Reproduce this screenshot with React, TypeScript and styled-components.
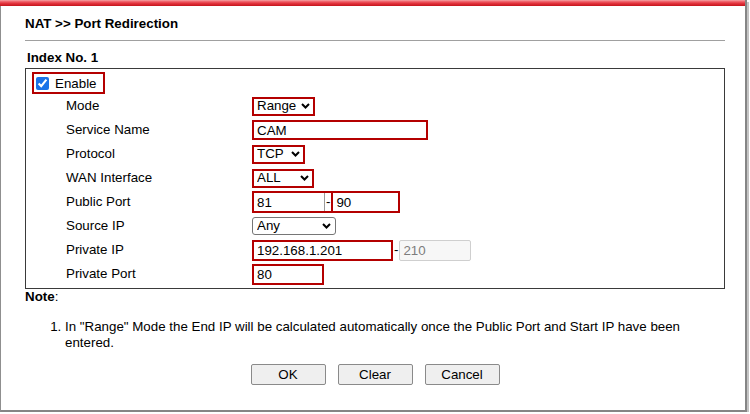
import React from "react";
import styled, { createGlobalStyle } from "styled-components";

const Global = createGlobalStyle`
  html, body { margin: 0; padding: 0; background: #fff; }
  body { font-family: "Liberation Sans", Arial, sans-serif; font-size: 13.33px; color: #000; }
  * { box-sizing: border-box; }
`;

const RED = "#b40000";
const FONT = `13.33px "Liberation Sans", Arial, sans-serif`;

const Frame = styled.div`
  width: 747px;
  height: 412px;
  background: #fff;
  border-left: 1px solid #8f8f8f;
  border-right: 2px solid #858585;
  border-bottom: 2px solid #858585;
  box-shadow: 2px 2px 0 #c4c4c4;
  display: flex;
  flex-direction: column;
`;

const TopBar = styled.div`
  height: 6px;
  margin-left: -1px;
  background: linear-gradient(#f6a3a6 0%, #ee5a62 30%, #e0303a 60%, #c4141c 100%);
`;

const Content = styled.div`
  padding: 0 20px 0 24px;
  display: flex;
  flex-direction: column;
`;

const Title = styled.div`
  padding: 10px 0 8px 0;
  line-height: 16px;
  font-weight: bold;
  border-bottom: 1px solid #a0a0a0;
`;

const IndexTitle = styled.div`
  margin: 9px 0 2px 2px;
  line-height: 16px;
  font-weight: bold;
`;

const Box = styled.div`
  border: 1px solid #3a3a3a;
  padding: 0 0 2px 0;
  display: flex;
  flex-direction: column;
`;

const EnableBox = styled.label`
  align-self: flex-start;
  margin: 3px 0 0 6px;
  height: 22px;
  border: 2px solid ${RED};
  padding: 0 6px 0 2px;
  display: inline-flex;
  align-items: center;
  gap: 6px;
`;

const Check = styled.input`
  width: 13px;
  height: 13px;
  margin: 0;
  accent-color: #1a73e8;
`;

const Rows = styled.div`
  padding-left: 40px;
  display: grid;
  grid-template-columns: 186px auto;
  grid-auto-rows: 24px;
  align-items: center;
`;

const Label = styled.div`
  line-height: 16px;
`;

const Cell = styled.div`
  display: flex;
  align-items: center;
  gap: 1px;
`;

const TextInput = styled.input<{ $w: number; $h: number }>`
  width: ${(p) => p.$w}px;
  height: ${(p) => p.$h}px;
  border: 2px solid ${RED};
  padding: 0 3px;
  margin: 0;
  font: ${FONT};
  color: #000;
  background: #fff;
  outline: none;
`;

const DisabledInput = styled.input`
  width: 72px;
  height: 21px;
  margin: 0;
  border: 1px solid #cfcfcf;
  border-radius: 2px;
  padding: 0 3px;
  font: ${FONT};
  color: #7d7d7d;
  background: #f7f7f7;
`;

const SelectWrap = styled.div`
  position: relative;
  display: inline-block;
`;

const Select = styled.select<{ $w: number; $h: number; $plain?: boolean }>`
  appearance: none;
  -webkit-appearance: none;
  width: ${(p) => p.$w}px;
  height: ${(p) => p.$h}px;
  margin: 0;
  padding: 0 0 0 ${(p) => (p.$plain ? 4 : 3)}px;
  border: ${(p) => (p.$plain ? "1px solid #767676" : `2px solid ${RED}`)};
  border-radius: ${(p) => (p.$plain ? "3px" : "0")};
  font: ${FONT};
  color: #000;
  background: #fff;
  line-height: 1;
`;

const Chevron = styled.svg`
  position: absolute;
  right: 5px;
  top: 50%;
  margin-top: -3px;
  pointer-events: none;
`;

const PortGroup = styled.div`
  display: inline-flex;
  align-items: stretch;
  width: 148px;
  height: 22px;
  border: 2px solid ${RED};
`;

const PortInput = styled.input<{ $first?: boolean }>`
  flex: ${(p) => (p.$first ? "0 0 71px" : "1 1 auto")};
  min-width: 0;
  margin: 0;
  border: none;
  ${(p) => (p.$first ? "border-right: 1px solid #9a9a9a;" : `border-left: 2px solid ${RED};`)}
  padding: 0 3px;
  font: ${FONT};
  color: #000;
  background: #fff;
  outline: none;
`;

const Dash = styled.span<{ $pad?: number }>`
  display: inline-flex;
  align-items: center;
  padding: 0 ${(p) => p.$pad ?? 1}px;
  line-height: 16px;
`;

const Note = styled.div`
  line-height: 16px;
  b { font-weight: bold; }
`;

const List = styled.ol`
  margin: 14px 0 0 0;
  padding: 0 20px 0 40px;
  line-height: 16px;
`;

const ButtonRow = styled.div`
  margin-top: 13px;
  display: flex;
  justify-content: center;
  gap: 12px;
`;

const Button = styled.button`
  width: 75px;
  height: 21px;
  border: 1px solid #8a8a8a;
  border-radius: 2px;
  background: #efefef;
  font: ${FONT};
  color: #000;
  padding: 0;
`;

const ChevronIcon = () => (
  <Chevron width="9" height="6" viewBox="0 0 9 6">
    <path d="M1 1 L4.5 4.5 L8 1" fill="none" stroke="#000" strokeWidth="2" />
  </Chevron>
);

type SelProps = { value: string; w: number; h: number; plain?: boolean };
const DropDown = ({ value, w, h, plain }: SelProps) => (
  <SelectWrap>
    <Select $w={w} $h={h} $plain={plain} defaultValue={value}>
      <option value={value}>{value}</option>
    </Select>
    <ChevronIcon />
  </SelectWrap>
);

export default function App() {
  return (
    <>
      <Global />
      <Frame>
        <TopBar />
        <Content>
          <Title>NAT &gt;&gt; Port Redirection</Title>
          <IndexTitle>Index No. 1</IndexTitle>
          <Box>
            <EnableBox>
              <Check type="checkbox" defaultChecked />
              <span>Enable</span>
            </EnableBox>
            <Rows>
              <Label>Mode</Label>
              <Cell>
                <DropDown value="Range" w={63} h={19} />
              </Cell>
              <Label>Service Name</Label>
              <Cell>
                <TextInput $w={176} $h={20} defaultValue="CAM" />
              </Cell>
              <Label>Protocol</Label>
              <Cell>
                <DropDown value="TCP" w={53} h={19} />
              </Cell>
              <Label>WAN Interface</Label>
              <Cell>
                <DropDown value="ALL" w={62} h={19} />
              </Cell>
              <Label>Public Port</Label>
              <Cell>
                <PortGroup>
                  <PortInput $first defaultValue="81" />
                  <Dash>-</Dash>
                  <PortInput defaultValue="90" />
                </PortGroup>
              </Cell>
              <Label>Source IP</Label>
              <Cell>
                <DropDown value="Any" w={84} h={18} plain />
              </Cell>
              <Label>Private IP</Label>
              <Cell>
                <TextInput $w={141} $h={21} defaultValue="192.168.1.201" />
                <Dash $pad={0}>-</Dash>
                <DisabledInput disabled defaultValue="210" />
              </Cell>
              <Label>Private Port</Label>
              <Cell>
                <TextInput $w={72} $h={21} defaultValue="80" />
              </Cell>
            </Rows>
          </Box>
          <Note>
            <b>Note</b>:
          </Note>
          <List>
            <li>
              In "Range" Mode the End IP will be calculated automatically once the Public Port and Start IP have been
              entered.
            </li>
          </List>
          <ButtonRow>
            <Button>OK</Button>
            <Button>Clear</Button>
            <Button>Cancel</Button>
          </ButtonRow>
        </Content>
      </Frame>
    </>
  );
}
